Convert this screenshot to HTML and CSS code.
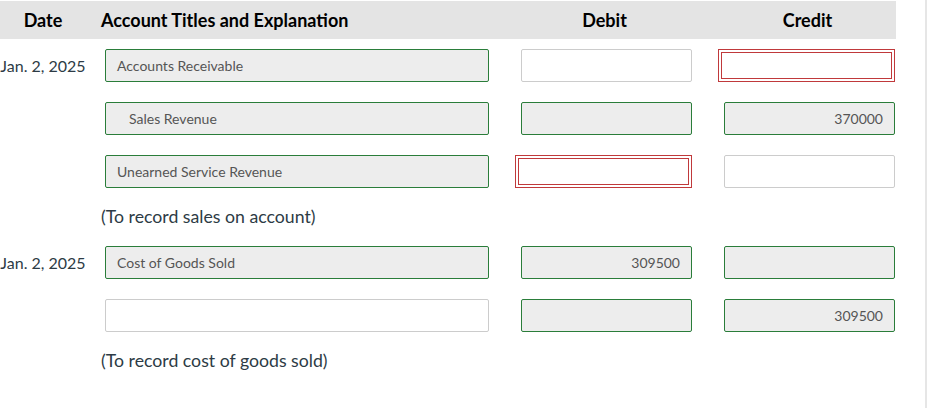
FILE: index.html
```html
<!DOCTYPE html>
<html lang="en">

<head>
    <meta charset="UTF-8">
    <meta name="viewport" content="width=device-width, initial-scale=1.0">
    <link rel="stylesheet" href="styles.css">
    <title>Journal Entry</title>
</head>

<body>
    <div class="page">
        <div class="head-row">
            <div class="col-date">Date</div>
            <div class="col-title">Account Titles and Explanation</div>
            <div class="col-debit">Debit</div>
            <div class="col-credit">Credit</div>
        </div>

        <!-- entry 1 -->
        <div class="row">
            <div class="col-date">Jan. 2, 2025</div>
            <div class="col-title"><div class="field ok">Accounts Receivable</div></div>
            <div class="col-debit"><div class="field blank"></div></div>
            <div class="col-credit"><div class="field error"></div></div>
        </div>
        <div class="row">
            <div class="col-date"></div>
            <div class="col-title"><div class="field ok indent">Sales Revenue</div></div>
            <div class="col-debit"><div class="field ok"></div></div>
            <div class="col-credit"><div class="field ok num">370000</div></div>
        </div>
        <div class="row">
            <div class="col-date"></div>
            <div class="col-title"><div class="field ok">Unearned Service Revenue</div></div>
            <div class="col-debit"><div class="field error"></div></div>
            <div class="col-credit"><div class="field blank"></div></div>
        </div>
        <div class="note">(To record sales on account)</div>

        <!-- entry 2 -->
        <div class="row">
            <div class="col-date">Jan. 2, 2025</div>
            <div class="col-title"><div class="field ok">Cost of Goods Sold</div></div>
            <div class="col-debit"><div class="field ok num">309500</div></div>
            <div class="col-credit"><div class="field ok"></div></div>
        </div>
        <div class="row">
            <div class="col-date"></div>
            <div class="col-title"><div class="field blank"></div></div>
            <div class="col-debit"><div class="field ok"></div></div>
            <div class="col-credit"><div class="field ok num">309500</div></div>
        </div>
        <div class="note">(To record cost of goods sold)</div>
    </div>
</body>

</html>
```

FILE: styles.css
```css
body {
    margin: 0;
    padding: 0;
    background-color: #ffffff;
    color: #2d3b45;
    font-family: Lato, "Noto Sans", sans-serif;
}

.page {
    width: 927px;
    min-height: 100vh;
    padding-top: 1px;
    border-right: 2px solid #e6e6e6;
    box-sizing: border-box;
}

.head-row,
.row {
    display: grid;
    grid-template-columns: 101px 420px 203px 171px;
    align-items: center;
}

.head-row {
    width: 896px;
    height: 38px;
    background-color: #e4e4e4;
    color: #000;
    font-weight: bold;
    font-size: 18px;
    margin-bottom: 10px;
}

.head-row .col-date {
    width: 86px;
    text-align: center;
}

.head-row .col-debit {
    padding-right: 36px;
    text-align: center;
}

.head-row .col-credit {
    padding-right: 4px;
    text-align: center;
}

.row {
    margin-bottom: 20px;
    font-size: 16px;
}

.row .col-date {
    width: 86px;
    text-align: center;
    color: #2d3b45;
}

.row .col-title {
    padding-left: 4px;
    padding-right: 32px;
}

.row .col-debit {
    padding-right: 32px;
}

.field {
    height: 33px;
    line-height: 31px;
    box-sizing: border-box;
    padding: 0 11px;
    font-size: 14px;
    color: #555;
    border-radius: 2px;
    white-space: nowrap;
}

.field.ok {
    background-color: #ededed;
    border: 1px solid #2a7d3a;
}

.field.blank {
    background-color: #fff;
    border: 1px solid #cccccc;
}

.field.error {
    background-color: #fff;
    border: 1px solid #c0393b;
    box-shadow: inset 0 0 0 2px #fff, inset 0 0 0 3px #c0393b;
    margin-left: -6px;
    border-radius: 0;
}

.field.indent {
    padding-left: 23px;
}

.field.num {
    text-align: right;
}

.note {
    padding-left: 101px;
    height: 18px;
    line-height: 18px;
    font-size: 17.7px;
    margin-bottom: 20px;
}
```
